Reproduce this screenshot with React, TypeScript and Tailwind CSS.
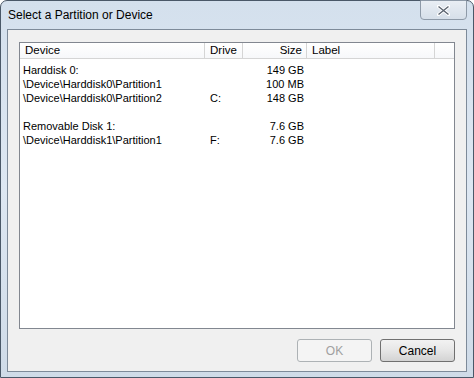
import * as React from 'react';

const rows = [
  { device: 'Harddisk 0:', drive: '', size: '149 GB' },
  { device: '\\Device\\Harddisk0\\Partition1', drive: '', size: '100 MB' },
  { device: '\\Device\\Harddisk0\\Partition2', drive: 'C:', size: '148 GB' },
  { device: '', drive: '', size: '' },
  { device: 'Removable Disk 1:', drive: '', size: '7.6 GB' },
  { device: '\\Device\\Harddisk1\\Partition1', drive: 'F:', size: '7.6 GB' },
];

export default function App() {
  return (
    <div className="w-[474px] h-[378px] bg-white" style={{ fontFamily: '"Liberation Sans", Arial, sans-serif' }}>
      {/* Window frame */}
      <div className="relative w-[474px] h-[378px] rounded-t-[7px] border border-[#4a5868] bg-gradient-to-b from-[#d4e0ed] via-[#dde7f2] to-[#cfdbe8] flex flex-col">
        {/* Title bar */}
        <div className="h-[28px] flex items-center pl-[7px] text-[12px] text-black">
          Select a Partition or Device
        </div>

        {/* Close button */}
        <button className="absolute top-[-1px] right-[6px] w-[47px] h-[20px] rounded-b-[4px] border border-[#8e9aa8] bg-gradient-to-b from-[#e9eef4] to-[#d6dfe9] flex items-center justify-center">
          <svg width="13" height="11" viewBox="0 0 13 11">
            <path d="M1.5 1.5 L11.5 9.5 M11.5 1.5 L1.5 9.5" stroke="#ffffff" strokeWidth="3.2" strokeLinecap="square" />
            <path d="M1.5 1.5 L11.5 9.5 M11.5 1.5 L1.5 9.5" stroke="#5b6470" strokeWidth="1.4" />
          </svg>
        </button>

        {/* Client area */}
        <div className="mx-[6px] h-[343px] border border-[#7d8a99] bg-[#f0f0f0] flex flex-col px-[11px] pt-[12px]">
          {/* List view */}
          <div className="h-[287px] border border-[#828790] bg-white flex flex-col text-[11.5px] text-black">
            <div className="h-[16px] flex items-stretch border-b border-[#d5d5d5] bg-gradient-to-b from-white to-[#f7f8fa] leading-[15px]">
              <div className="w-[185px] pl-[5px] border-r border-[#d5d5d5]">Device</div>
              <div className="w-[38px] pl-[5px] border-r border-[#d5d5d5]">Drive</div>
              <div className="w-[64px] pr-[4px] text-right border-r border-[#d5d5d5]">Size</div>
              <div className="w-[128px] pl-[5px] border-r border-[#d5d5d5]">Label</div>
              <div className="flex-1" />
            </div>
            <div className="pt-[4px] text-[11px]">
              {rows.map((r, i) => (
                <div key={i} className="h-[14px] flex leading-[14px] whitespace-nowrap">
                  <div className="w-[185px] pl-[3px]">{r.device}</div>
                  <div className="w-[38px] pl-[5px]">{r.drive}</div>
                  <div className="w-[64px] pr-[3px] text-right">{r.size}</div>
                </div>
              ))}
            </div>
          </div>

          {/* Buttons */}
          <div className="flex justify-end gap-[8px] mt-[10px] text-[12px]">
            <button disabled className="w-[75px] h-[23px] rounded-[3px] border border-[#adb2b5] bg-[#f4f4f4] text-[#a0a0a0]">
              OK
            </button>
            <button className="w-[75px] h-[23px] rounded-[3px] border border-[#707070] bg-gradient-to-b from-[#f2f2f2] via-[#e6e6e6] to-[#d3d3d3] text-black">
              Cancel
            </button>
          </div>
        </div>
      </div>
    </div>
  );
}
